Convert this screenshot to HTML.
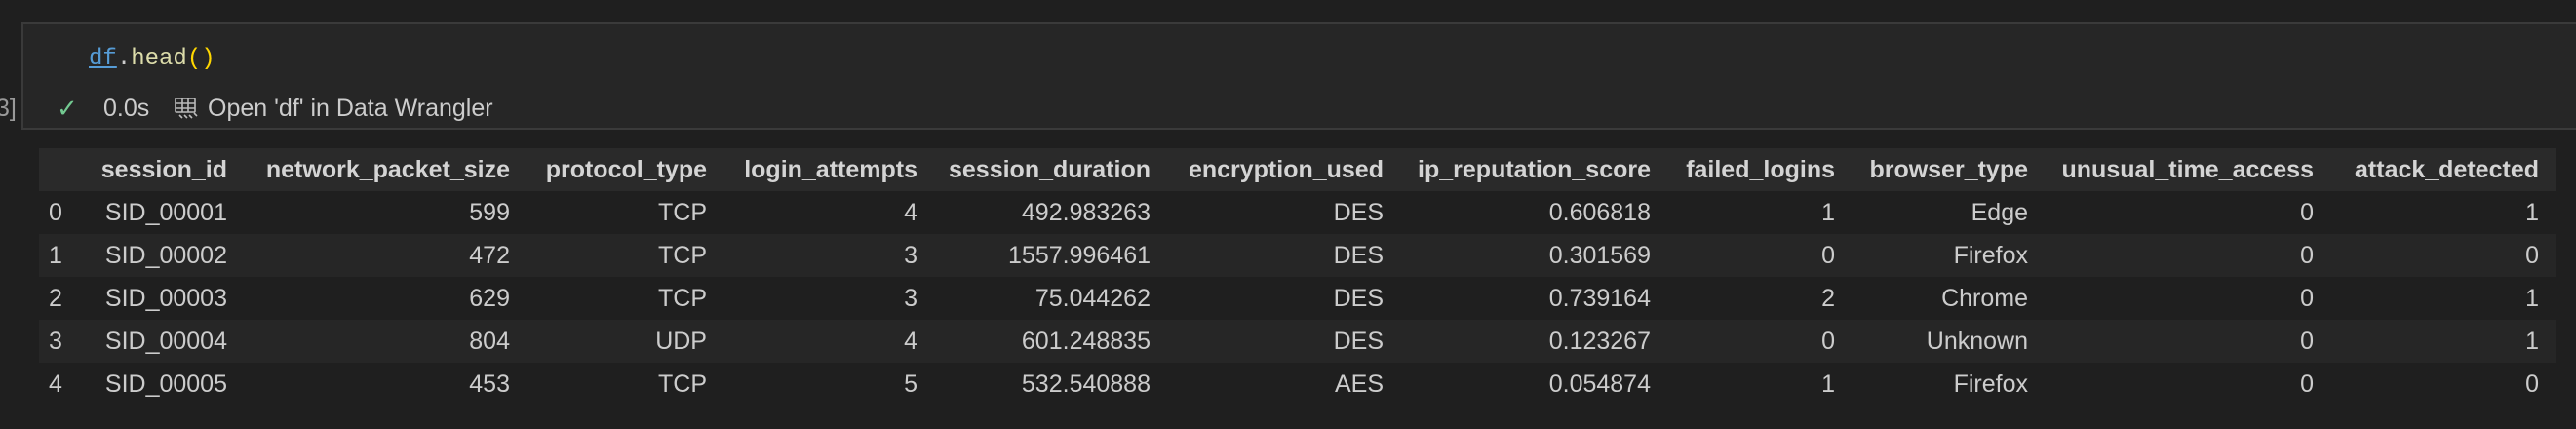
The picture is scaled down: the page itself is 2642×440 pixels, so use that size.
<!DOCTYPE html>
<html><head><meta charset="utf-8"><style>
body{margin:0;width:2642px;height:440px;background:#1f1f1f;overflow:hidden;position:relative;font-family:"Liberation Sans",sans-serif;color:#cccccc}
.cell{position:absolute;left:22px;top:23px;width:2640px;height:110px;background:#262626;border:2px solid #3a3a3a;border-right:none;box-sizing:border-box}
.code{position:absolute;left:91px;top:47px;font-family:"Liberation Mono",monospace;font-size:24px;color:#dcdcaa}
.st{position:absolute;top:97px;font-size:25px;color:#cccccc}
.tbl{position:absolute;left:40px;top:152px;width:2582px}
.row{position:absolute;left:0;width:2582px;height:44px}
.t{position:absolute;top:0;line-height:44px;font-size:25px;text-align:right;white-space:nowrap}
.h .t{font-weight:bold;color:#d4d4d4}
</style></head><body>
<div style="position:absolute;left:-4px;top:97px;font-size:25px;color:#999">3]</div>
<div class="cell"></div>
<div class="code"><span style="color:#569cd6;text-decoration:underline">df</span><span style="color:#ccc">.</span>head<span style="color:#ffd700">()</span></div>
<div class="st" style="left:58px;color:#73c991;font-size:26px;top:96px">✓</div>
<div class="st" style="left:106px">0.0s</div>
<svg style="position:absolute;left:178px;top:99px" width="26" height="26" viewBox="0 0 26 26" fill="none" stroke="#bbb" stroke-width="1.6"><rect x="2" y="2" width="20" height="14" rx="1"/><path d="M2 7h20M2 12h20M9 2v14M15 2v14M6 19l3 3M11 19l3 3M16 19l3 3M21 17l3 3"/></svg>
<div class="st" style="left:213px">Open 'df' in Data Wrangler</div>
<div class="tbl">
<div class="row h" style="top:0;background:#2a2a2a">
<div class="t" style="right:2389px">session_id</div><div class="t" style="right:2099px">network_packet_size</div><div class="t" style="right:1897px">protocol_type</div><div class="t" style="right:1681px">login_attempts</div><div class="t" style="right:1442px">session_duration</div><div class="t" style="right:1203px">encryption_used</div><div class="t" style="right:929px">ip_reputation_score</div><div class="t" style="right:740px">failed_logins</div><div class="t" style="right:542px">browser_type</div><div class="t" style="right:249px">unusual_time_access</div><div class="t" style="right:18px">attack_detected</div>
</div>
<div class="row" style="top:44px">
<div class="t" style="left:10px">0</div><div class="t" style="right:2389px">SID_00001</div><div class="t" style="right:2099px">599</div><div class="t" style="right:1897px">TCP</div><div class="t" style="right:1681px">4</div><div class="t" style="right:1442px">492.983263</div><div class="t" style="right:1203px">DES</div><div class="t" style="right:929px">0.606818</div><div class="t" style="right:740px">1</div><div class="t" style="right:542px">Edge</div><div class="t" style="right:249px">0</div><div class="t" style="right:18px">1</div>
</div>
<div class="row" style="top:88px;background:#262626">
<div class="t" style="left:10px">1</div><div class="t" style="right:2389px">SID_00002</div><div class="t" style="right:2099px">472</div><div class="t" style="right:1897px">TCP</div><div class="t" style="right:1681px">3</div><div class="t" style="right:1442px">1557.996461</div><div class="t" style="right:1203px">DES</div><div class="t" style="right:929px">0.301569</div><div class="t" style="right:740px">0</div><div class="t" style="right:542px">Firefox</div><div class="t" style="right:249px">0</div><div class="t" style="right:18px">0</div>
</div>
<div class="row" style="top:132px">
<div class="t" style="left:10px">2</div><div class="t" style="right:2389px">SID_00003</div><div class="t" style="right:2099px">629</div><div class="t" style="right:1897px">TCP</div><div class="t" style="right:1681px">3</div><div class="t" style="right:1442px">75.044262</div><div class="t" style="right:1203px">DES</div><div class="t" style="right:929px">0.739164</div><div class="t" style="right:740px">2</div><div class="t" style="right:542px">Chrome</div><div class="t" style="right:249px">0</div><div class="t" style="right:18px">1</div>
</div>
<div class="row" style="top:176px;background:#262626">
<div class="t" style="left:10px">3</div><div class="t" style="right:2389px">SID_00004</div><div class="t" style="right:2099px">804</div><div class="t" style="right:1897px">UDP</div><div class="t" style="right:1681px">4</div><div class="t" style="right:1442px">601.248835</div><div class="t" style="right:1203px">DES</div><div class="t" style="right:929px">0.123267</div><div class="t" style="right:740px">0</div><div class="t" style="right:542px">Unknown</div><div class="t" style="right:249px">0</div><div class="t" style="right:18px">1</div>
</div>
<div class="row" style="top:220px">
<div class="t" style="left:10px">4</div><div class="t" style="right:2389px">SID_00005</div><div class="t" style="right:2099px">453</div><div class="t" style="right:1897px">TCP</div><div class="t" style="right:1681px">5</div><div class="t" style="right:1442px">532.540888</div><div class="t" style="right:1203px">AES</div><div class="t" style="right:929px">0.054874</div><div class="t" style="right:740px">1</div><div class="t" style="right:542px">Firefox</div><div class="t" style="right:249px">0</div><div class="t" style="right:18px">0</div>
</div>
</div>
</body></html>
